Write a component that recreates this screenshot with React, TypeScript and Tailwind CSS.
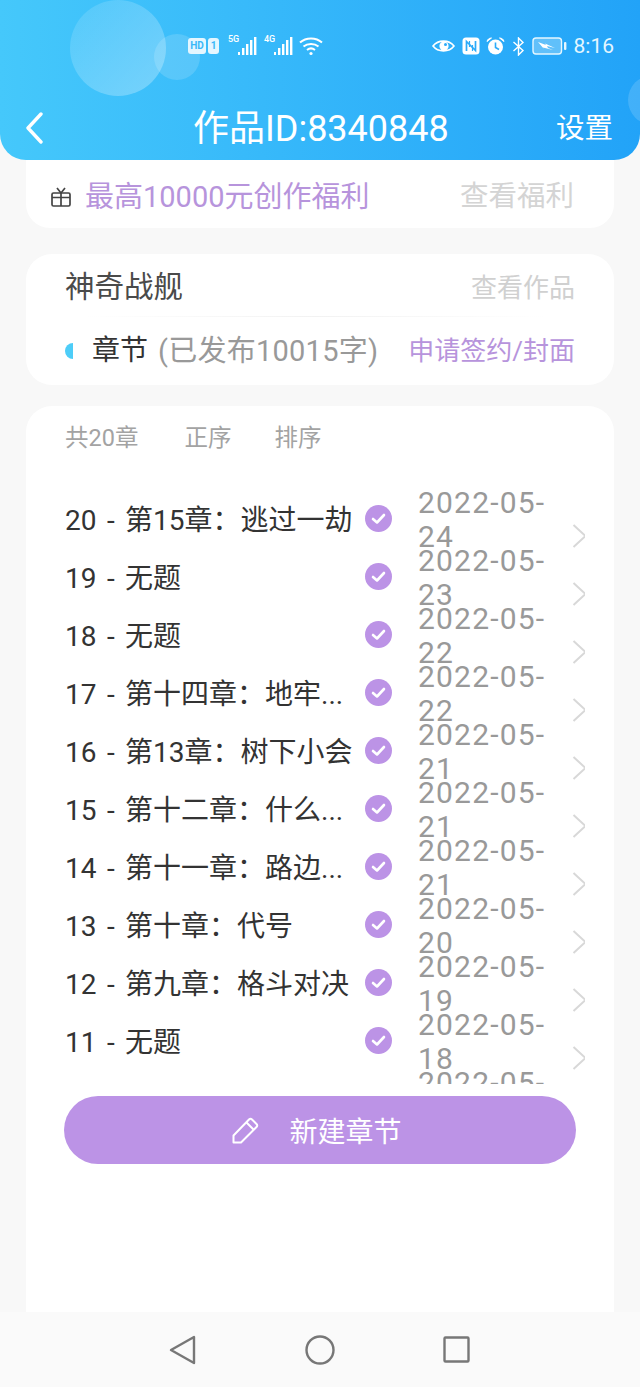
const chapters = [
  { title: '20 - 第15章：逃过一劫', date: '24', month: '2022-05-' },
  { title: '19 - 无题', date: '23', month: '2022-05-' },
  { title: '18 - 无题', date: '22', month: '2022-05-' },
  { title: '17 - 第十四章：地牢...', date: '22', month: '2022-05-' },
  { title: '16 - 第13章：树下小会', date: '21', month: '2022-05-' },
  { title: '15 - 第十二章：什么...', date: '21', month: '2022-05-' },
  { title: '14 - 第十一章：路边...', date: '21', month: '2022-05-' },
  { title: '13 - 第十章：代号', date: '20', month: '2022-05-' },
  { title: '12 - 第九章：格斗对决', date: '19', month: '2022-05-' },
  { title: '11 - 无题', date: '18', month: '2022-05-' },
  { title: '10 - 无题', date: '18', month: '2022-05-' },
]

const Signal = ({ label }: { label: string }) => (
  <div className="relative w-[30px] h-[20px]">
    <span className="absolute left-0 -top-[2px] text-[9px] leading-[10px] font-medium text-white">{label}</span>
    <svg width="30" height="20" viewBox="0 0 30 20" fill="#fff" className="absolute left-0 top-0">
      <rect x="10" y="16" width="2" height="3" />
      <rect x="14" y="12" width="2.4" height="7" />
      <rect x="18" y="8" width="2.4" height="11" />
      <rect x="22" y="4" width="2.4" height="15" />
      <rect x="26" y="1" width="2.4" height="18" />
    </svg>
  </div>
)

const StatusBar = () => (
  <div className="relative flex items-center h-[20px] pl-[188px] pr-[26px] text-white">
    <div className="flex items-center justify-center w-[18px] h-[16px] rounded-[3px] bg-[#e4f6ff] text-[#3bb8f8] text-[10px] leading-none font-bold">
      HD
    </div>
    <div className="flex items-center justify-center ml-[2px] w-[11px] h-[16px] rounded-[3px] bg-[#e4f6ff] text-[#3bb8f8] text-[10px] leading-none font-bold">
      1
    </div>
    <div className="ml-[9px]">
      <Signal label="5G" />
    </div>
    <div className="ml-[6px]">
      <Signal label="4G" />
    </div>
    <svg width="24" height="20" viewBox="0 0 24 20" fill="none" stroke="#fff" strokeWidth="2" className="ml-[5px]">
      <path d="M1 6.5C7 1 17 1 23 6.5" />
      <path d="M4.5 10.5C8.5 7 15.5 7 19.5 10.5" />
      <path d="M8 14C10.5 12 13.5 12 16 14" />
      <circle cx="12" cy="17.5" r="1.6" fill="#fff" stroke="none" />
    </svg>
    <div className="flex-1" />
    <svg width="23" height="16" viewBox="0 0 23 16" fill="none" className="mr-[7px]">
      <path d="M1 8C6 1.5 17 1.5 22 8C17 14.5 6 14.5 1 8Z" stroke="#fff" strokeWidth="1.6" />
      <circle cx="12" cy="8" r="4.6" fill="#fff" />
      <circle cx="13.5" cy="6.5" r="1.5" fill="#2cabf9" />
    </svg>
    <svg width="18" height="18" viewBox="0 0 18 18" className="mr-[6px]">
      <rect x="0.5" y="0.5" width="17" height="17" rx="3.5" fill="#fff" />
      <path d="M4.5 14V4.5L13.5 13.5V4" fill="none" stroke="#2cabf9" strokeWidth="1.7" />
      <path d="M7.5 4V10M10.5 8V14" fill="none" stroke="#2cabf9" strokeWidth="1.2" />
    </svg>
    <svg width="19" height="18" viewBox="0 0 19 18" className="mr-[7px]">
      <circle cx="9.5" cy="10" r="7.5" fill="#fff" />
      <path d="M1 4.5C1.5 2.5 3 1 5.5 1ZM18 4.5C17.5 2.5 16 1 13.5 1Z" fill="#fff" stroke="#fff" />
      <path d="M9.5 5.5V10.5L13 12.5" fill="none" stroke="#2cabf9" strokeWidth="1.6" />
    </svg>
    <svg width="13" height="19" viewBox="0 0 13 19" fill="none" stroke="#fff" strokeWidth="1.4" className="mr-[7px]">
      <path d="M1.5 5L11 13.5L6.5 18V1L11 5.5L1.5 14" />
    </svg>
    <svg width="35" height="18" viewBox="0 0 35 18" className="mr-[7px]">
      <rect x="1" y="1" width="28.5" height="16" rx="3" fill="#8fd4fb" fillOpacity="0.55" stroke="#e4f6ff" strokeWidth="1.4" />
      <rect x="32" y="5" width="2.4" height="8" rx="1" fill="#e4f6ff" />
      <path d="M6 5L14 8L13 6.5L23 11L15 9L16 11L21 13L11 10.5L12 12Z" fill="#fff" />
    </svg>
    <span className="text-[21px] leading-none text-[#e4f6ff]">8:16</span>
  </div>
)

const CheckBadge = () => (
  <svg width="27" height="27" viewBox="0 0 27 27" className="flex-none mb-[3px]">
    <circle cx="13.5" cy="13.5" r="13.5" fill="#bc93e6" />
    <path d="M8 14L12 17.5L19 10" fill="none" stroke="#fff" strokeWidth="2.6" strokeLinecap="round" strokeLinejoin="round" />
  </svg>
)

const ChapterRow = ({ title, month, date }: { title: string; month: string; date: string }) => (
  <div className="flex items-center h-[58px]">
    <div className="w-[300px] flex-none pt-[2px] text-[28px] leading-[58px] [word-spacing:3.5px] text-[#333] whitespace-nowrap overflow-hidden">
      {title}
    </div>
    <CheckBadge />
    <div className="flex-none ml-[26px] w-[154px] text-[30px] leading-[34px] tracking-[1.2px] text-[#999]">
      <div>{month}</div>
      <div>{date}</div>
    </div>
    <svg width="15" height="24" viewBox="0 0 15 24" fill="none" stroke="#d8d8d8" strokeWidth="2" className="flex-none mt-[32px]">
      <path d="M1.5 1L13.5 12L1.5 23" />
    </svg>
  </div>
)

export default function App() {
  return (
    <div className="w-[640px] h-[1387px] flex flex-col overflow-hidden bg-[#f8f8f8] font-[family-name:Roboto,'Noto_Sans_CJK_SC',sans-serif]">
      {/* header */}
      <div className="relative flex-none h-[160px] rounded-b-[26px] overflow-hidden bg-gradient-to-r from-[#45c8fb] to-[#22a3f8] pt-[36px]">
        <div className="absolute left-[70px] top-0 w-[96px] h-[96px] rounded-full bg-gradient-to-br from-white/10 to-white/30" />
        <div className="absolute left-[154px] top-[34px] w-[46px] h-[46px] rounded-full bg-white/15" />
        <div className="absolute left-[628px] top-[75px] w-[50px] h-[50px] rounded-full bg-white/15" />
        <StatusBar />
        <div className="relative flex items-center justify-between h-[50px] mt-[47px] pr-[27px] text-white">
          <svg width="18" height="32" viewBox="0 0 18 32" fill="none" stroke="#fff" strokeWidth="3.4" strokeLinecap="round" strokeLinejoin="round" className="ml-[25px]">
            <path d="M16 2L3 16L16 30" />
          </svg>
          <div className="absolute left-[193px] top-[1px] text-[36px] leading-[50px] whitespace-nowrap">作品ID:8340848</div>
          <div className="pt-[1px] text-[28.5px] leading-[50px]">设置</div>
        </div>
      </div>

      {/* welfare banner */}
      <div className="flex-none flex items-center h-[68px] mx-[26px] pl-[25px] pr-[40px] pt-[6px] bg-white rounded-b-[24px]">
        <svg width="20" height="20" viewBox="0 0 20 20" fill="none" stroke="#444" strokeWidth="1.7">
          <rect x="1" y="6" width="18" height="13" rx="1.5" />
          <path d="M1 10.5H19M10 6V19" />
          <path d="M10 6L6 1M10 6L14 1" />
        </svg>
        <span className="ml-[14px] text-[29px] leading-none text-[#b794dc]">最高10000元创作福利</span>
        <span className="ml-auto text-[28.5px] leading-none text-[#d4d4d4]">查看福利</span>
      </div>

      {/* work info */}
      <div className="flex-none mx-[26px] mt-[26px] h-[131px] bg-white rounded-[26px] px-[39px]">
        <div className="flex items-center justify-between h-[62px] pt-[5px]">
          <span className="text-[29.5px] leading-none text-[#4a4a4a]">神奇战舰</span>
          <span className="text-[26px] leading-none text-[#d0d0d0]">查看作品</span>
        </div>
        <div className="h-px ml-[20px] mr-[30px] bg-gradient-to-r from-white via-[#f2f2f2] to-white" />
        <div className="flex items-center h-[66px] pt-[2px]">
          <div className="w-[8px] h-[16px] rounded-l-full bg-[#4dcdf8]" />
          <span className="ml-[19px] text-[28px] leading-none text-[#333]">章节</span>
          <span className="ml-[10px] text-[29px] leading-none tracking-[0.25px] text-[#999]">(已发布10015字)</span>
          <span className="ml-auto text-[26px] leading-none text-[#b794dc]">申请签约/封面</span>
        </div>
      </div>

      {/* chapter list */}
      <div className="flex-1 min-h-0 mx-[26px] mt-[21px] bg-white rounded-t-[26px] px-[39px]">
        <div className="flex items-center h-[64px] pt-[2px] text-[23.5px] text-[#a3a3a3]">
          <span>共20章</span>
          <span className="ml-[46px]">正序</span>
          <span className="ml-[43px]">排序</span>
        </div>
        <div className="h-[598px] mt-[16px] pt-[5px] overflow-hidden w-[520px]">
          {chapters.map((c) => (
            <ChapterRow key={c.title} title={c.title} month={c.month} date={c.date} />
          ))}
        </div>
        <button className="flex items-center justify-center w-[512px] h-[68px] mt-[12px] -ml-[1px] pr-[6px] rounded-full bg-[#bc93e6] text-white text-[28px]">
          <svg width="27" height="27" viewBox="0 0 27 27" fill="none" stroke="#fff" strokeWidth="2" strokeLinejoin="round">
            <path d="M1.5 25.5V18.5L17 2.5Q18.5 1 20 2.5L24.5 7Q26 8.5 24.5 10L9 25.5Z" />
            <path d="M14.5 5.5L21.5 12.5" />
          </svg>
          <span className="ml-[30px] pt-[5px]">新建章节</span>
        </button>
      </div>

      {/* nav bar */}
      <div className="flex-none flex items-center justify-center h-[75px] pr-[2px] bg-[#fafafa]">
        <svg width="27" height="30" viewBox="0 0 27 30" fill="none" stroke="#777" strokeWidth="2.4" strokeLinejoin="round">
          <path d="M25 2V28L2 15Z" />
        </svg>
        <svg width="30" height="30" viewBox="0 0 30 30" fill="none" stroke="#777" strokeWidth="2.4" className="ml-[109px]">
          <circle cx="15" cy="15" r="13.5" />
        </svg>
        <svg width="27" height="27" viewBox="0 0 27 27" fill="none" stroke="#777" strokeWidth="2.4" strokeLinejoin="round" className="ml-[108px]">
          <rect x="1.5" y="1.5" width="24" height="24" rx="1" />
        </svg>
      </div>
    </div>
  )
}
